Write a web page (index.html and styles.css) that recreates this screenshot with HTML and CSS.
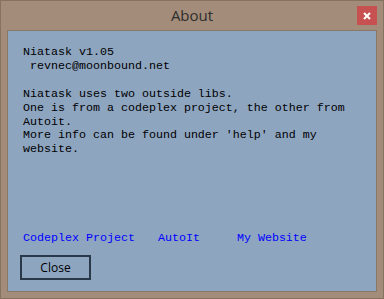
FILE: index.html
```html
<!DOCTYPE html>
<html lang="en">
<head>
    <meta charset="UTF-8">
    <title>About</title>
    <link rel="stylesheet" href="styles.css">
</head>
<body>
    <div class="window">
        <div class="titlebar">
            <span></span>
            <h1 class="title">About</h1>
            <button class="close-x" type="button" aria-label="Close">
                <svg width="8" height="8" viewBox="0 0 8 8"><path d="M1 1 L7 7 M7 1 L1 7" stroke="#fff" stroke-width="2"/></svg>
            </button>
        </div>
        <div class="client">
<pre class="about-text">Niatask v1.05
 revnec@moonbound.net

Niatask uses two outside libs.
One is from a codeplex project, the other from
Autoit.
More info can be found under 'help' and my
website.</pre>
            <div class="links">
                <a href="#" class="link-codeplex">Codeplex Project</a>
                <a href="#" class="link-autoit">AutoIt</a>
                <a href="#" class="link-site">My Website</a>
            </div>
            <button type="button" class="close-btn">Close</button>
        </div>
    </div>
</body>
</html>
```

FILE: styles.css
```css
* {
    margin: 0;
    padding: 0;
    box-sizing: border-box;
}
body {
    background-color: #a48c7a;
}
.window {
    width: 384px;
    height: 299px;
    border: 1px solid #85735f;
    background-color: #a48c7a;
    display: flex;
    flex-direction: column;
}
.titlebar {
    height: 29px;
    display: grid;
    grid-template-columns: 1fr auto 1fr;
    align-items: center;
}
.title {
    font-family: "Open Sans", "Noto Sans", sans-serif;
    font-weight: 400;
    font-size: 15px;
    color: #2e2e2e;
    line-height: 29px;
}
.close-x {
    justify-self: end;
    align-self: start;
    margin-top: 5px;
    margin-right: 6px;
    width: 20px;
    height: 19px;
    border: none;
    background-color: #c75050;
    display: flex;
    align-items: center;
    justify-content: center;
}
.close-x svg {
    display: block;
}
.client {
    flex: 1;
    margin: 0 6px 6px;
    border: 1px solid #8a7866;
    background-color: #8ea5c0;
    padding: 15px 15px 11px 15px;
    display: flex;
    flex-direction: column;
}
.about-text {
    font-family: "Liberation Mono", "Courier New", monospace;
    font-size: 11.67px;
    line-height: 13.9px;
    color: #000;
    flex: 1;
}
.links {
    display: flex;
    font-family: "Liberation Mono", "Courier New", monospace;
    font-size: 11.67px;
    line-height: 14px;
}
.links a {
    color: #0000ff;
    text-decoration: none;
}
.link-autoit {
    margin-left: 23px;
}
.link-site {
    margin-left: 37px;
}
.close-btn {
    margin-top: 10px;
    margin-left: -3px;
    width: 71px;
    height: 25px;
    border: 2px solid #2a394a;
    background-color: transparent;
    font-family: "Open Sans", "Noto Sans", sans-serif;
    font-size: 12px;
    color: #000;
}
```
